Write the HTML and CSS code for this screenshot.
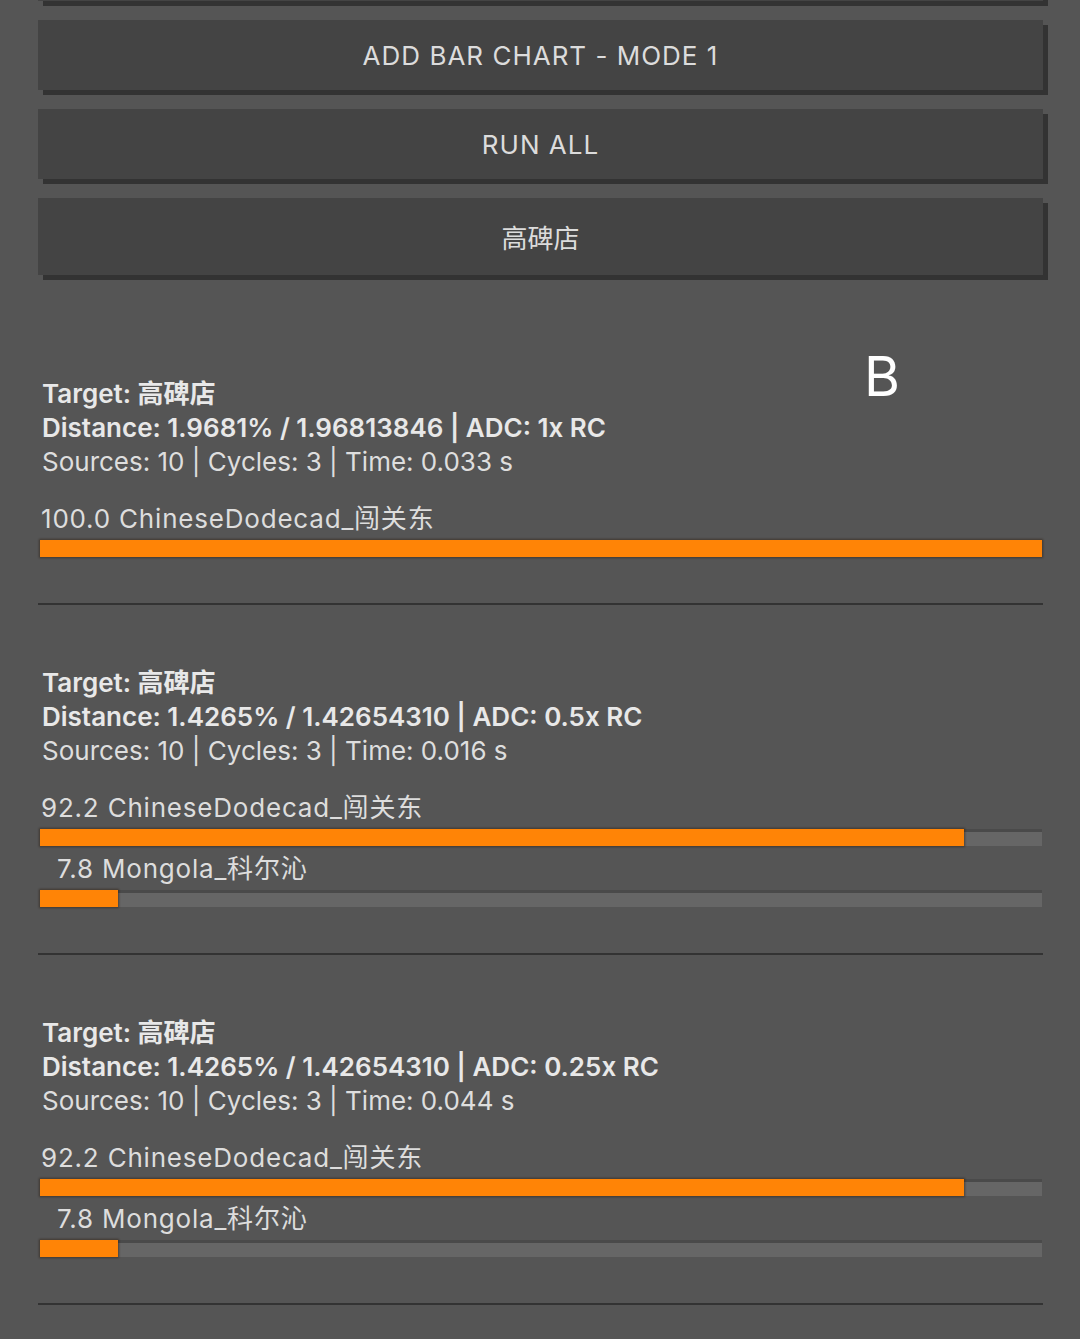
FILE: index.html
```html
<!DOCTYPE html>
<html lang="en">
<head>
  <meta charset="UTF-8">
  <meta name="viewport" content="width=device-width, initial-scale=1.0">
  <title>Admixture Runner</title>
  <link rel="stylesheet" href="styles.css">
</head>
<body>
  <div class="page">
    <div class="btn btn-scrolled"></div>
    <div class="btn">ADD BAR CHART - MODE 1</div>
    <div class="btn">RUN ALL</div>
    <div class="btn btn-cjk">高碑店</div>

    <div class="results" id="results"></div>
  </div>

  <script>
    const results = [
      { target: "高碑店", pct: "1.9681%", dist: "1.96813846", adc: "1x RC", sources: 10, cycles: 3, time: "0.033",
        rows: [{ value: 100.0, name: "ChineseDodecad_闯关东" }] },
      { target: "高碑店", pct: "1.4265%", dist: "1.42654310", adc: "0.5x RC", sources: 10, cycles: 3, time: "0.016",
        rows: [{ value: 92.2, name: "ChineseDodecad_闯关东" }, { value: 7.8, name: "Mongola_科尔沁" }] },
      { target: "高碑店", pct: "1.4265%", dist: "1.42654310", adc: "0.25x RC", sources: 10, cycles: 3, time: "0.044",
        rows: [{ value: 92.2, name: "ChineseDodecad_闯关东" }, { value: 7.8, name: "Mongola_科尔沁" }] }
    ];

    const list = document.getElementById("results");

    results.forEach((r, index) => {
      const div = document.createElement("div");
      div.className = "result";
      let bars = "";
      r.rows.forEach(row => {
        const pad = row.value < 10 ? " pad" : "";
        bars += `
          <div class="label${pad}">${row.value.toFixed(1)} ${row.name}</div>
          <div class="track"><div class="fill" style="width: ${row.value}%"></div></div>
        `;
      });
      div.innerHTML = `
        ${index === 0 ? '<div class="mark">B</div>' : ''}
        <div class="line strong">Target: ${r.target}</div>
        <div class="line strong">Distance: ${r.pct} / ${r.dist} | ADC: ${r.adc}</div>
        <div class="line">Sources: ${r.sources} | Cycles: ${r.cycles} | Time: ${r.time} s</div>
        <div class="bars">${bars}</div>
      `;
      list.appendChild(div);
    });
  </script>
</body>
</html>
```

FILE: styles.css
```css
body {
  margin: 0;
  background: #555555;
  font-family: Inter, "Noto Sans CJK SC", sans-serif;
  color: #e2e2e2;
  overflow: hidden;
}
.page {
  padding: 0 37px 0 38px;
}
.btn {
  height: 70px;
  margin-bottom: 19px;
  background: #444444;
  box-shadow: 5px 5px 0 #333333;
  display: flex;
  align-items: center;
  justify-content: center;
  font-size: 26px;
  letter-spacing: 1px;
  color: #dcdcdc;
}
.btn-scrolled {
  margin-top: -69px;
}
.btn-cjk {
  height: 77px;
  letter-spacing: 0;
}
.results {
  margin-top: 41px;
}
.result {
  position: relative;
  padding: 61px 1px 46px 2px;
  border-bottom: 2px solid #333333;
}
.mark {
  position: absolute;
  top: 33px;
  left: 826px;
  font-size: 55px;
  line-height: 1;
  color: #ffffff;
}
.line {
  height: 34px;
  line-height: 34px;
  padding-left: 2px;
  font-size: 26px;
  color: #dedede;
}
.strong {
  font-weight: 600;
  color: #e8e8e8;
}
.bars {
  margin-top: 23px;
}
.label {
  height: 34px;
  line-height: 34px;
  margin-top: 6px;
  margin-bottom: 4px;
  padding-left: 1px;
  font-size: 26px;
  letter-spacing: 0.8px;
  color: #dddddd;
}
.label:first-child {
  margin-top: 0;
}
.label.pad {
  padding-left: 17px;
}
.track {
  height: 17px;
  background: #666666;
  box-shadow: inset 0 3px 0 #4a4a4a;
}
.fill {
  height: 100%;
  background: #ff8406;
  box-shadow: 0 0 2px 1px rgba(40, 20, 0, 0.45);
}
```
